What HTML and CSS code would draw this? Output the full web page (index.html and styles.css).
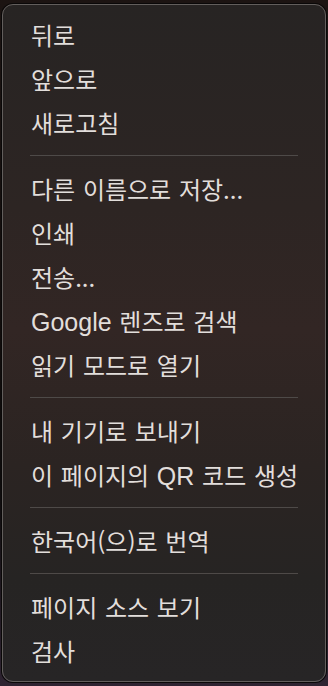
FILE: index.html
```html
<!DOCTYPE html>
<html lang="ko">
  <head>
    <meta charset="UTF-8" />
    <meta name="viewport" content="width=device-width, initial-scale=1.0" />
    <title>Context Menu</title>
    <link rel="stylesheet" href="styles.css">
  </head>
  <body>
    <div class="menu">
      <div class="item">뒤로</div>
      <div class="item">앞으로</div>
      <div class="item">새로고침</div>
      <div class="separator"></div>
      <div class="item">다른 이름으로 저장...</div>
      <div class="item">인쇄</div>
      <div class="item">전송...</div>
      <div class="item"><span class="latin">Google</span> 렌즈로 검색</div>
      <div class="item">읽기 모드로 열기</div>
      <div class="separator"></div>
      <div class="item">내 기기로 보내기</div>
      <div class="item">이 페이지의 <span class="latin">QR</span> 코드 생성</div>
      <div class="separator"></div>
      <div class="item">한국어(으)로 번역</div>
      <div class="separator"></div>
      <div class="item">페이지 소스 보기</div>
      <div class="item">검사</div>
    </div>
  </body>
</html>
```

FILE: styles.css
```css
html,
body {
  margin: 0;
  height: 100%;
}
body {
  background: linear-gradient(180deg, #1c1412 0%, #120d0c 40%, #0d0b0b 70%, #2e2331 100%);
  font-family: "Noto Sans CJK KR", "Noto Sans", sans-serif;
  overflow: hidden;
}
.menu {
  margin: 4px 0 0 2px;
  width: 322px;
  padding: 8px 0 8px;
  border: 1px solid #625e5c;
  border-radius: 11px;
  box-shadow: 0 0 0 1px #0a0808;
  background: linear-gradient(180deg, #272423 0%, #2d2523 30%, #322624 48%, #2b2422 68%, #262423 85%, #272526 100%);
}
.item {
  height: 44px;
  line-height: 44px;
  padding-left: 28px;
  font-size: 24px;
  color: #e2dedb;
  word-spacing: 1px;
  white-space: nowrap;
}
.latin {
  font-family: "Liberation Sans", sans-serif;
  font-size: 25px;
}
.separator {
  height: 1px;
  margin: 10px 27px 11px;
  background: #4e4a48;
}
```
